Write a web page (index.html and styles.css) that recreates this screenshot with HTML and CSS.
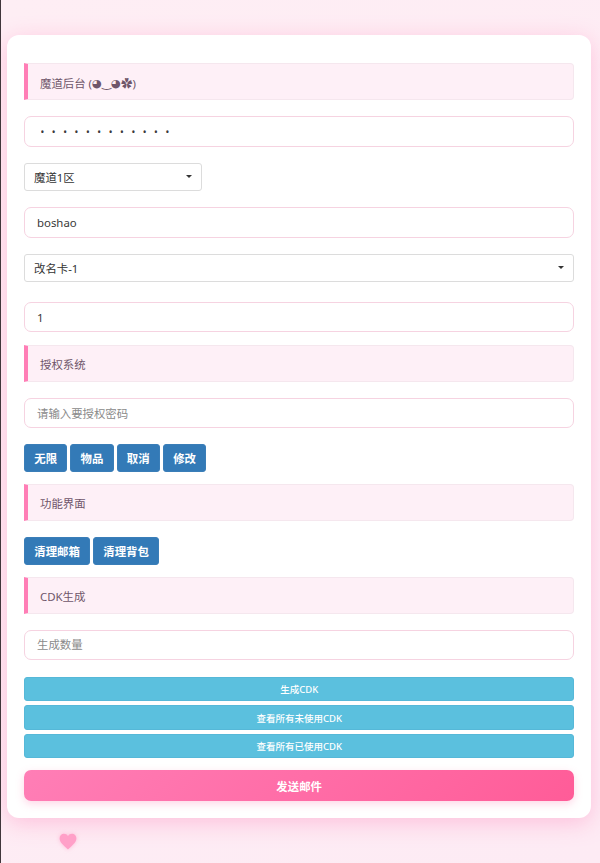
FILE: index.html
```html
<!DOCTYPE html>
<html lang="zh">
<head>
<meta charset="utf-8">
<title>魔道后台</title>
<link rel="stylesheet" href="styles.css">
</head>
<body>
<main class="card">
  <div class="alert gap-16">魔道后台&nbsp;(<span class="kao">◕‿◕</span>✿)</div>
  <input class="field gap-16h" type="password" value="aaaaaaaaaaaa">
  <div class="select-wrap short gap-16h"><select class="select"><option>魔道1区</option></select></div>
  <input class="field gap-16h" type="text" value="boshao">
  <div class="select-wrap gap-20"><select class="select"><option>改名卡-1</option></select></div>
  <input class="field gap-12h" type="text" value="1">
  <div class="alert gap-15h">授权系统</div>
  <input class="field gap-16" type="text" placeholder="请输入要授权密码">
  <div class="btn-row gap-12">
    <button class="btn">无限</button>
    <button class="btn">物品</button>
    <button class="btn">取消</button>
    <button class="btn">修改</button>
  </div>
  <div class="alert gap-16">功能界面</div>
  <div class="btn-row gap-12">
    <button class="btn">清理邮箱</button>
    <button class="btn">清理背包</button>
  </div>
  <div class="alert gap-16">CDK生成</div>
  <input class="field gap-16h" type="text" placeholder="生成数量">
  <div class="cdk-list gap-12">
    <button class="btn-info">生成CDK</button>
    <button class="btn-info">查看所有未使用CDK</button>
    <button class="btn-info">查看所有已使用CDK</button>
  </div>
  <button class="btn-send">发送邮件</button>
</main>
<svg class="heart" viewBox="0 0 24 22" aria-hidden="true"><path d="M12 21.5C5 15.5 .8 11.6 .8 6.7.8 3.2 3.500.8 6.600.8c2.200 0 4.200 1.100 5.400 3.100C13.200 1.900 15.200.8 17.400.8c3.100 0 5.800 2.400 5.800 5.900 0 4.900-4.200 8.800-11.200 14.800z"/></svg>
</body>
</html>
```
FILE: styles.css
```css
* { box-sizing: border-box; }
html, body { margin: 0; height: 100%; }
body {
  position: relative;
  height: 863px;
  overflow: hidden;
  padding: 35px 9px 0 6px;
  background: linear-gradient(135deg, #feeef4, #fdebf4);
  border-left: 1px solid #40363b;
  font-family: "Noto Sans", "Noto Sans CJK SC", sans-serif;
  font-size: 11.4px;
  color: #333;
}
.card {
  display: flex;
  flex-direction: column;
  height: 783px;
  padding: 28.3px 16.7px 0 17px;
  background: #fff;
  border-radius: 12px;
  box-shadow: 0 5px 22px rgba(255, 140, 190, .45);
}
.gap-12 { margin-bottom: 12px; }
.gap-12h { margin-bottom: 12.7px; }
.gap-15h { margin-bottom: 15.8px; }
.gap-16 { margin-bottom: 16px; }
.gap-16h { margin-bottom: 16.5px; }
.gap-20 { margin-bottom: 20px; }
.alert {
  display: flex;
  align-items: center;
  flex: none;
  height: 37px;
  padding: 1.5px 0 0 12px;
  background: #fef0f7;
  border: 1px solid #f5e7ee;
  border-left: 4px solid #ff7eb6;
  border-radius: 0 4px 4px 0;
  color: #6f566a;
  font-size: 11.4px;
}
.kao { font-family: "DejaVu Sans", sans-serif; }
.field {
  flex: none;
  width: 100%;
  height: 30.5px;
  padding: 0 12px;
  background: #fff;
  border: 1.3px solid #f6d3e1;
  border-radius: 7px;
  color: #3a3a3a;
  font: inherit;
  outline: none;
}
.field::placeholder { color: #8a8a8a; opacity: 1; }
.field[type="password"] { padding-left: 15.5px; letter-spacing: 7.6px; font-size: 10px; }
.select-wrap { position: relative; flex: none; height: 27.5px; }
.select-wrap.short { width: 178px; }
.select-wrap::after {
  content: "";
  position: absolute;
  top: 12px;
  right: 10px;
  border: 3.6px solid transparent;
  border-bottom-width: 0;
  border-top-color: #333;
}
.select {
  appearance: none;
  display: block;
  width: 100%;
  height: 100%;
  padding: 0 24px 0 9px;
  background: #fff;
  border: 1px solid #dcdcdc;
  border-radius: 3px;
  color: #333;
  font: inherit;
}
.btn-row { display: flex; flex: none; gap: 3px; }
.btn {
  height: 27.7px;
  padding: 0 9.25px;
  background: #337ab7;
  border: 1px solid #3a7eb8;
  border-radius: 3px;
  color: #fff;
  font: 600 11.4px "Noto Sans", "Noto Sans CJK SC", sans-serif;
}
.cdk-list { display: flex; flex-direction: column; flex: none; gap: 4.3px; }
.btn-info {
  width: 100%;
  height: 24.4px;
  padding: 0;
  background: #5bc0de;
  border: 1px solid #56b8d8;
  border-radius: 3px;
  color: #fff;
  font: 500 9.5px "Noto Sans", "Noto Sans CJK SC", sans-serif;
}
.btn-send {
  flex: none;
  height: 30.5px;
  padding: 0;
  background: linear-gradient(135deg, #ff7eb6, #ff5c98);
  border: 0;
  border-radius: 7px;
  box-shadow: 0 3px 8px rgba(255, 110, 170, .28);
  color: #fff;
  font: 700 11.4px "Noto Sans", "Noto Sans CJK SC", sans-serif;
}
.heart {
  position: absolute;
  left: 58px;
  top: 833px;
  width: 18px;
  height: 17px;
  fill: #ffa0c8;
  filter: drop-shadow(0 0 2px rgba(255, 160, 200, .6));
}
```
